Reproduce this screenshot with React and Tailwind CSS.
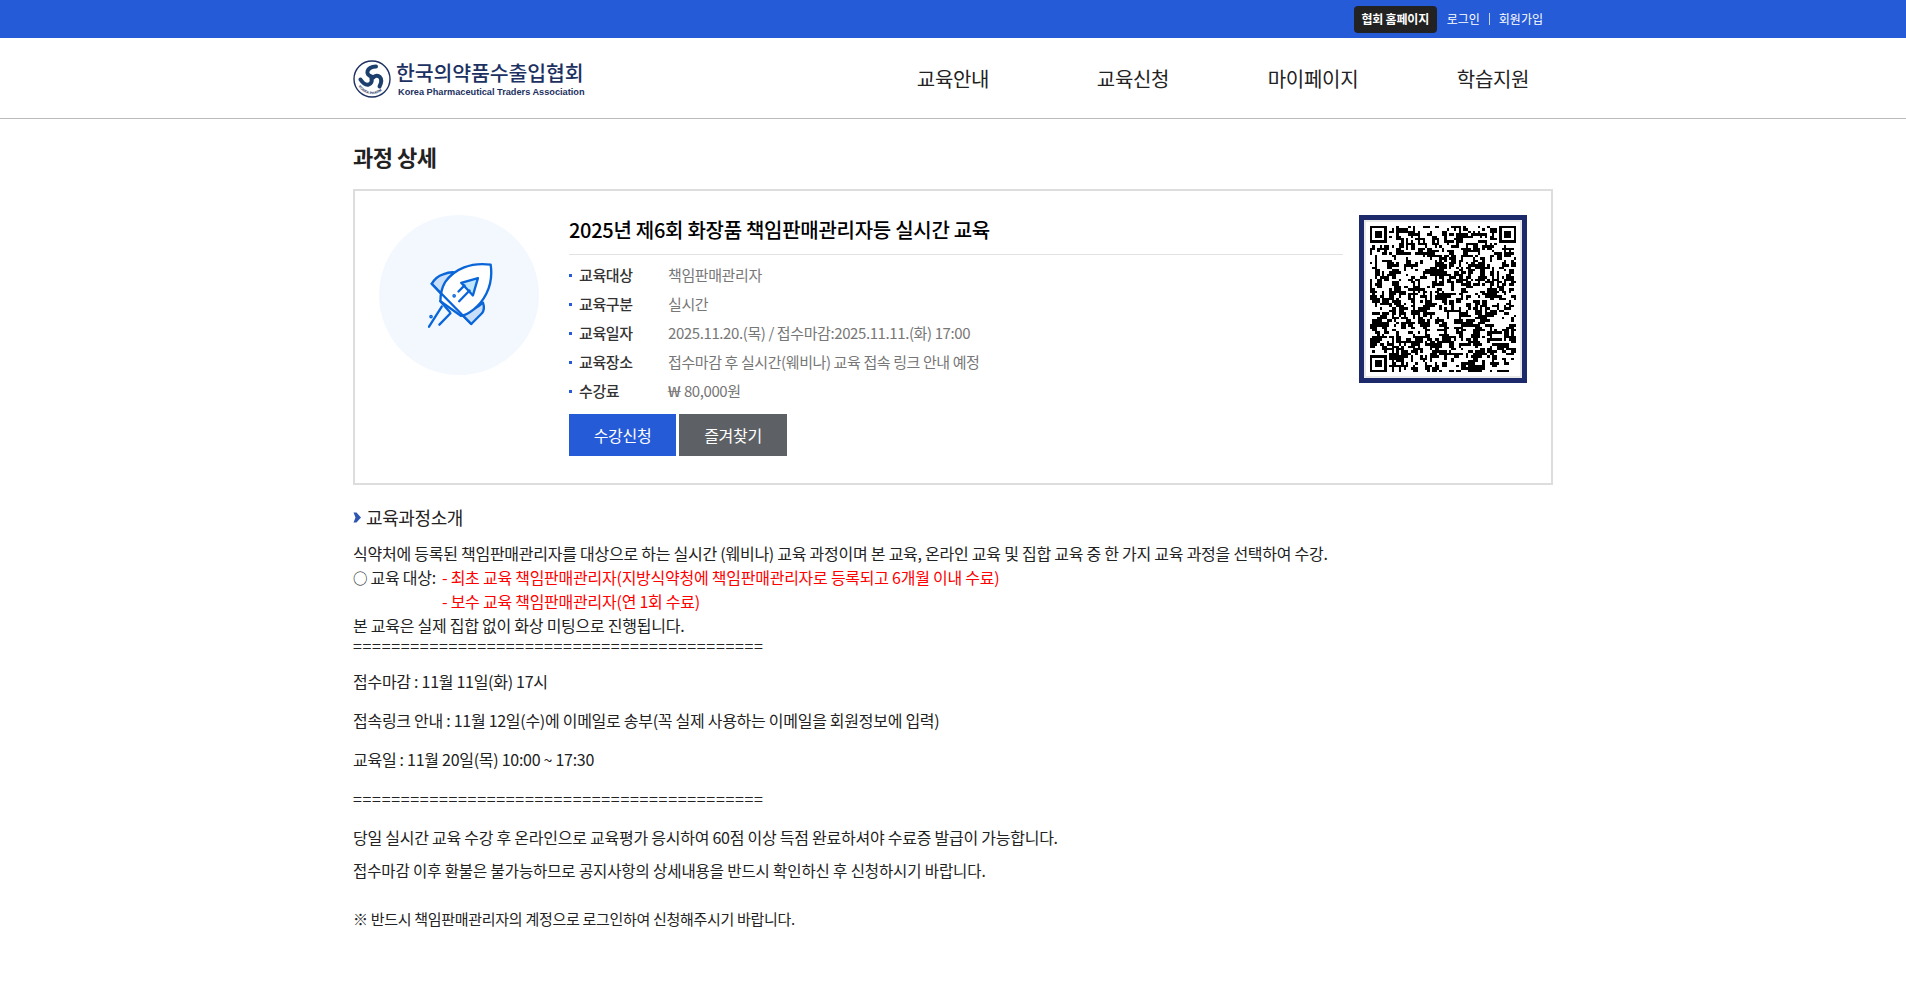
const FONT = '"Noto Sans CJK KR", "Noto Sans", sans-serif';

// QR modules: seeded noise, the finder squares are real
function qrPath() {
  const size = 61;
  let seed = 20251120;
  const rand = () => {
    seed = (seed * 1664525 + 1013904223) % 4294967296;
    return (seed >>> 16) / 65536;
  };
  const finder = (x, y, ox, oy) => {
    const dx = x - ox;
    const dy = y - oy;
    if (dx < 0 || dy < 0 || dx > 6 || dy > 6) return false;
    return dx === 0 || dx === 6 || dy === 0 || dy === 6 || (dx >= 2 && dx <= 4 && dy >= 2 && dy <= 4);
  };
  const grid = [];
  let d = '';
  for (let y = 0; y < size; y++) {
    grid.push([]);
    for (let x = 0; x < size; x++) {
      // neighbours pull the noise into runs, like the blocks of the real code
      const left = x > 0 && grid[y][x - 1];
      const up = y > 0 && grid[y - 1][x];
      let on = rand() < 0.28 + (left ? 0.22 : 0) + (up ? 0.22 : 0);
      if ((x < 8 && y < 8) || (x > size - 9 && y < 8) || (x < 8 && y > size - 9)) {
        on = finder(x, y, 0, 0) || finder(x, y, size - 7, 0) || finder(x, y, 0, size - 7);
      }
      grid[y].push(on);
      if (on) d += `M${x} ${y}h1v1h-1z`;
    }
  }
  return d;
}

function QrCode() {
  return (
    <div className="w-[168px] h-[168px] shrink-0 border-[5px] border-[#1c2a6b] bg-[#e9e9e9] p-[2px]">
      <div className="w-full h-full bg-white flex items-center justify-center">
        <svg width="146" height="146" viewBox="0 0 61 61" shapeRendering="crispEdges">
          <path d={qrPath()} fill="#000" />
        </svg>
      </div>
    </div>
  );
}

function Rocket() {
  return (
    <svg width="67" height="67" viewBox="165 155 200 200" fill="none" stroke="#0a66d8" strokeWidth="7" strokeLinecap="round" strokeLinejoin="round">
      <path d="M216 192C196 198 188 210 182 220L212 252C218 228 228 205 250 186C238 184 226 188 216 192Z" fill="#c9def8" />
      <path d="M335 276C340 290 338 300 332 308L300 340L268 308C292 304 318 292 335 276Z" fill="#c9def8" />
      <path d="M358 163C300 155 250 175 222 215C212 232 208 255 208 272L270 316C290 312 325 290 345 250C360 220 362 190 358 163Z" fill="#fff" />
      <path d="M182 220L300 340" />
      <path d="M208 272L236 304" />
      <path d="M320 203L270 217L305 255Z" fill="#bfe6fd" />
      <path d="M295 240L264 272M280 225L262 243" />
      <path d="M212 288L174 348M238 308L205 342" />
      <circle cx="249" cy="256" r="2" fill="#0a66d8" />
      <circle cx="180" cy="318" r="2" fill="#0a66d8" />
    </svg>
  );
}

function Emblem() {
  return (
    <svg width="38" height="38" viewBox="0 0 38 38" className="shrink-0 mt-[2px]">
      <circle cx="19" cy="19" r="18" fill="#fff" stroke="#1c3161" strokeWidth="1.4" />
      <path id="emblem-ring" d="M4.5 23A15 15 0 0 0 33.5 23" fill="none" />
      <text fontSize="3.6" fontWeight="700" fill="#1c3161" fontFamily='"Liberation Sans", sans-serif'>
        <textPath href="#emblem-ring" startOffset="8%">KOREA PHARM</textPath>
      </text>
      <g fill="none" stroke="#1c3f6e" strokeWidth="4" strokeLinecap="round">
        <path d="M18.5 16.5C12 15 13 7 23 6.5" />
        <path d="M18.5 16.5C12 15 13 7 23 6.5" transform="rotate(120 19 17.5)" />
        <path d="M18.5 16.5C12 15 13 7 23 6.5" transform="rotate(240 19 17.5)" />
      </g>
    </svg>
  );
}

const infoRows = [
  ['교육대상', '책임판매관리자'],
  ['교육구분', '실시간'],
  ['교육일자', '2025.11.20.(목) / 접수마감:2025.11.11.(화) 17:00'],
  ['교육장소', '접수마감 후 실시간(웨비나) 교육 접속 링크 안내 예정'],
  ['수강료', <><span className="inline-block scale-x-150 origin-left mr-[5px]">₩</span> 80,000원</>],
];

function App() {
  return (
    <div className="min-h-[988px] bg-white text-[#111] overflow-hidden" style={{ fontFamily: FONT }}>
      <div className="h-[38px] bg-[#265bd8]">
        <div className="w-[1200px] mx-auto flex items-center h-full justify-end pr-[10px] text-[12px] text-white">
          <a className="h-[27px] w-[83px] flex items-center justify-center rounded-[4px] bg-[#222] font-bold tracking-[-0.2px]">협회 홈페이지</a>
          <a className="ml-[10px]">로그인</a>
          <span className="mx-[9px] h-[12px] w-px bg-[#c5d3f3]" />
          <a>회원가입</a>
        </div>
      </div>

      <div className="h-[81px] border-b border-[#bbb]">
        <div className="w-[1200px] mx-auto h-full flex items-center justify-between">
          <div className="flex items-center gap-[4px]">
            <Emblem />
            <div className="w-[190px] ml-[1px] pt-[2px]">
              <div className="text-[20.5px] leading-[23px] font-medium text-[#1c3161] whitespace-nowrap tracking-[-0.1px]">한국의약품수출입협회</div>
              <div className="mt-[2px] pl-[2px] text-[9.2px] leading-[12px] font-bold text-[#1c3161] whitespace-nowrap" style={{ fontFamily: '"Liberation Sans", sans-serif' }}>Korea Pharmaceutical Traders Association</div>
            </div>
          </div>
          <nav className="flex -mr-[30px] text-[20px] leading-[30px] pt-[2px] tracking-[-0.3px] text-[#222]">
            <a className="w-[180px] text-center">교육안내</a>
            <a className="w-[180px] text-center">교육신청</a>
            <a className="w-[180px] text-center">마이페이지</a>
            <a className="w-[180px] text-center">학습지원</a>
          </nav>
        </div>
      </div>

      <main className="w-[1200px] mx-auto">
        <h1 className="mt-[21px] text-[22px] leading-[32px] font-bold tracking-[-0.5px] text-[#222]">과정 상세</h1>

        <section className="mt-[17px] h-[296px] border-2 border-[#ddd] pt-[24px] pl-[24px] pr-[24px] flex">
          <div className="w-[160px] h-[160px] rounded-full bg-[#f3f8ff] flex items-center justify-center shrink-0">
            <Rocket />
          </div>
          <div className="ml-[30px] w-[774px]">
            <h2 className="h-[38px] leading-[30px] text-[20px] font-medium tracking-[-0.28px] text-black border-b border-[#e3e3e3] box-content pb-[1px]">2025년 제6회 화장품 책임판매관리자등 실시간 교육</h2>
            <ul className="mt-[6px]">
              {infoRows.map(([label, value]) => (
                <li key={label} className="h-[29px] flex items-center text-[15px] tracking-[-0.4px]">
                  <span className="w-[3px] h-[3px] bg-[#265bd8] mr-[7px]" />
                  <span className="w-[89px] font-medium text-[#333]">{label}</span>
                  <span className="text-[#777]">{value}</span>
                </li>
              ))}
            </ul>
            <div className="mt-[8px] flex gap-[3px] text-[16px] text-white tracking-[-0.3px]">
              <button className="w-[107px] h-[42px] bg-[#265bd8]">수강신청</button>
              <button className="w-[108px] h-[42px] bg-[#5d6165]">즐겨찾기</button>
            </div>
          </div>
          <div className="ml-[16px]">
            <QrCode />
          </div>
        </section>

        <h3 className="mt-[18px] flex items-center text-[18px] leading-[28px] tracking-[-0.4px] text-[#222]">
          <svg width="8" height="11" viewBox="0 0 8 11" className="mr-[5px]">
            <path d="M0.5 0.5H3.5L8 5.5L3.5 10.5H0.5L2.5 5.5Z" fill="#2f57b0" />
          </svg>
          교육과정소개
        </h3>

        <div className="mt-[10px] text-[16px] leading-[24px] tracking-[-0.25px] text-[#222]">
          <p>식약처에 등록된 책임판매관리자를 대상으로 하는 실시간 (웨비나) 교육 과정이며 본 교육, 온라인 교육 및 집합 교육 중 한 가지 교육 과정을 선택하여 수강.</p>
          <p className="flex h-[24px]">
            <span className="w-[89px] shrink-0"><span className="text-[14.5px] leading-none">○</span> 교육 대상:</span>
            <span className="text-[#ff0000]">- 최초 교육 책임판매관리자(지방식약청에 책임판매관리자로 등록되고 6개월 이내 수료)</span>
          </p>
          <p className="pl-[89px] text-[#ff0000]">- 보수 교육 책임판매관리자(연 1회 수료)</p>
          <p>본 교육은 실제 집합 없이 화상 미팅으로 진행됩니다.</p>
          <p className="h-[16px] leading-[16px] tracking-[0.67px]">===========================================</p>
          <p className="mt-[21px] h-[15px] leading-[15px] tracking-[-0.28px]">접수마감 : 11월 11일(화) 17시</p>
          <p className="mt-[24px] h-[15px] leading-[15px] tracking-[-0.28px]">접속링크 안내 : 11월 12일(수)에 이메일로 송부(꼭 실제 사용하는 이메일을 회원정보에 입력)</p>
          <p className="mt-[24px] h-[15px] leading-[15px] tracking-[-0.28px]">교육일 : 11월 20일(목) 10:00 ~ 17:30</p>
          <p className="mt-[24px] h-[15px] leading-[15px] tracking-[0.67px]">===========================================</p>
          <p className="mt-[24px] h-[15px] leading-[15px]">당일 실시간 교육 수강 후 온라인으로 교육평가 응시하여 60점 이상 득점 완료하셔야 수료증 발급이 가능합니다.</p>
          <p className="mt-[18px] h-[15px] leading-[15px] text-[15.5px] tracking-[-0.1px]">접수마감 이후 환불은 불가능하므로 공지사항의 상세내용을 반드시 확인하신 후 신청하시기 바랍니다.</p>
          <p className="mt-[33px] h-[15px] leading-[15px] text-[15px] tracking-[-0.3px]">※ 반드시 책임판매관리자의 계정으로 로그인하여 신청해주시기 바랍니다.</p>
        </div>
      </main>
    </div>
  );
}

export default App;
